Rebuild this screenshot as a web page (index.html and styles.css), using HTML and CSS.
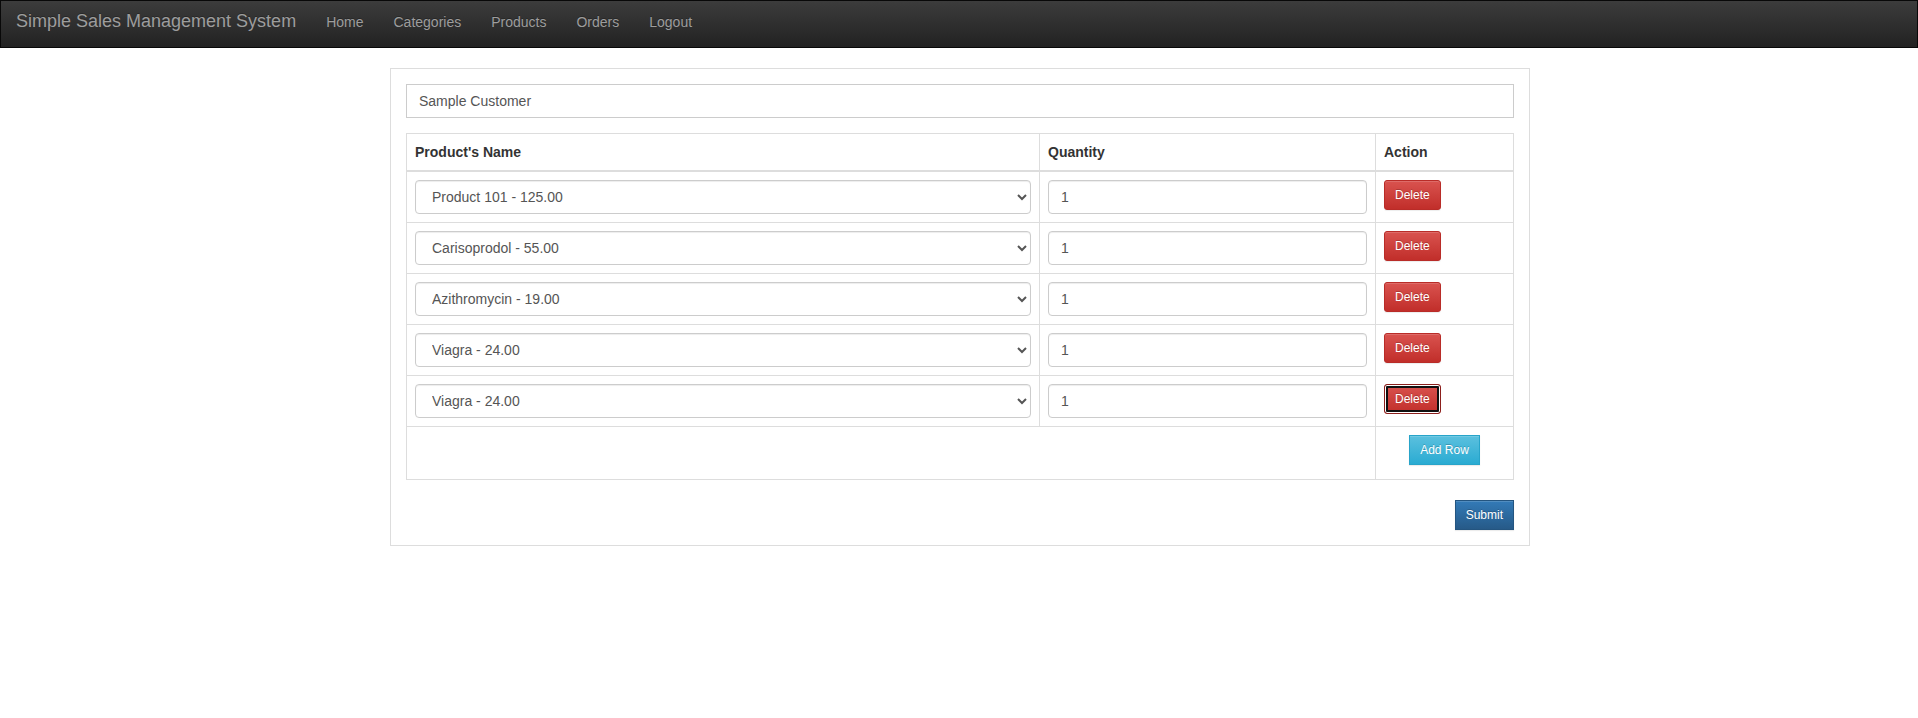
FILE: index.html
```html
<!DOCTYPE html>
<html lang="en">

<head>
    <meta charset="UTF-8">
    <title>Simple Sales Management System</title>
    <link rel="stylesheet" href="styles.css">
</head>

<body>
    <nav class="navbar">
        <a class="brand" href="#">Simple Sales Management System</a>
        <ul class="nav">
            <li><a href="#">Home</a></li>
            <li><a href="#">Categories</a></li>
            <li><a href="#">Products</a></li>
            <li><a href="#">Orders</a></li>
            <li><a href="#">Logout</a></li>
        </ul>
    </nav>

    <div class="container">
        <form class="box">
            <div class="form-group">
                <input class="form-control customer" type="text" value="Sample Customer">
            </div>

            <table class="order-table">
                <colgroup>
                    <col class="col-name">
                    <col class="col-qty">
                    <col class="col-action">
                </colgroup>
                <thead>
                    <tr>
                        <th>Product's Name</th>
                        <th>Quantity</th>
                        <th>Action</th>
                    </tr>
                </thead>
                <tbody>
                    <tr>
                        <td>
                            <select class="form-control">
                                <option>Product 101 - 125.00</option>
                            </select>
                        </td>
                        <td><input class="form-control" type="text" value="1"></td>
                        <td><button type="button" class="btn btn-sm btn-danger">Delete</button></td>
                    </tr>
                    <tr>
                        <td>
                            <select class="form-control">
                                <option>Carisoprodol - 55.00</option>
                            </select>
                        </td>
                        <td><input class="form-control" type="text" value="1"></td>
                        <td><button type="button" class="btn btn-sm btn-danger">Delete</button></td>
                    </tr>
                    <tr>
                        <td>
                            <select class="form-control">
                                <option>Azithromycin - 19.00</option>
                            </select>
                        </td>
                        <td><input class="form-control" type="text" value="1"></td>
                        <td><button type="button" class="btn btn-sm btn-danger">Delete</button></td>
                    </tr>
                    <tr>
                        <td>
                            <select class="form-control">
                                <option>Viagra - 24.00</option>
                            </select>
                        </td>
                        <td><input class="form-control" type="text" value="1"></td>
                        <td><button type="button" class="btn btn-sm btn-danger">Delete</button></td>
                    </tr>
                    <tr>
                        <td>
                            <select class="form-control">
                                <option>Viagra - 24.00</option>
                            </select>
                        </td>
                        <td><input class="form-control" type="text" value="1"></td>
                        <td><button type="button" class="btn btn-sm btn-danger focused">Delete</button></td>
                    </tr>
                    <tr class="add-row">
                        <td colspan="2"></td>
                        <td class="center"><button type="button" class="btn btn-sm btn-info">Add Row</button></td>
                    </tr>
                </tbody>
            </table>

            <div class="actions">
                <button type="button" class="btn btn-sm btn-primary">Submit</button>
            </div>
        </form>
    </div>
</body>

</html>
```

FILE: styles.css
```css
* {
    box-sizing: border-box;
}

body {
    margin: 0px;
    font-family: "Liberation Sans", Arial, sans-serif;
    font-size: 14px;
    line-height: 20px;
    color: #333;
    background-color: #fff;
}

a {
    text-decoration: none;
}

/* top bar */
.navbar {
    display: flex;
    height: 48px;
    margin-bottom: 20px;
    border: 1px solid #080808;
    background-image: linear-gradient(to bottom, #3c3c3c 0, #222 100%);
}

.brand {
    padding: 10px 15px;
    font-size: 18px;
    line-height: 20px;
    color: #9d9d9d;
    text-shadow: 0 -1px 0 rgba(0, 0, 0, .25);
}

.nav {
    display: flex;
    margin: 0px;
    padding: 0px;
    list-style: none;
}

.nav a {
    display: block;
    padding: 11px 15px;
    line-height: 20px;
    color: #9d9d9d;
    text-shadow: 0 -1px 0 rgba(0, 0, 0, .25);
}

/* page */
.container {
    width: 1170px;
    margin: 0px auto;
    padding: 0px 14px 0px 16px;
}

.box {
    display: block;
    margin: 0px;
    padding: 15px;
    border: 1px solid #ddd;
}

.form-group {
    margin-bottom: 15px;
}

.form-control {
    display: block;
    width: 100%;
    height: 34px;
    padding: 6px 12px;
    font-family: inherit;
    font-size: 14px;
    line-height: 20px;
    color: #555;
    background-color: #fff;
    border: 1px solid #ccc;
    border-radius: 4px;
    box-shadow: inset 0 1px 1px rgba(0, 0, 0, .075);
}

.customer {
    border-radius: 0px;
    box-shadow: none;
}

/* table */
.order-table {
    width: 100%;
    margin-bottom: 20px;
    border-collapse: collapse;
    border-spacing: 0;
    table-layout: fixed;
}

.col-name {
    width: 633px;
}

.col-qty {
    width: 336px;
}

.order-table th,
.order-table td {
    padding: 8px;
    border: 1px solid #ddd;
    vertical-align: top;
    text-align: left;
}

.order-table th {
    font-weight: bold;
    vertical-align: bottom;
    border-bottom-width: 2px;
}

.add-row td {
    padding-bottom: 14px;
}

.add-row td.center {
    text-align: center;
}

/* buttons */
.btn {
    display: inline-block;
    margin: 0px;
    font-family: inherit;
    font-weight: normal;
    color: #fff;
    text-align: center;
    white-space: nowrap;
    vertical-align: top;
    cursor: pointer;
    border: 1px solid transparent;
    text-shadow: 0 -1px 0 rgba(0, 0, 0, .2);
    box-shadow: inset 0 1px 0 rgba(255, 255, 255, .15), 0 1px 1px rgba(0, 0, 0, .075);
}

.btn-sm {
    height: 30px;
    padding: 5px 10px;
    font-size: 12px;
    line-height: 18px;
    border-radius: 3px;
}

.btn-danger {
    background-image: linear-gradient(to bottom, #d9534f 0, #c12e2a 100%);
    border-color: #b92c28;
}

.btn-danger.focused {
    border-color: #8c1f1c;
    box-shadow: inset 0 0 0 1px #fff, inset 0 0 0 3px #101010;
}

.btn-info {
    background-image: linear-gradient(to bottom, #5bc0de 0, #2aabd2 100%);
    border-color: #28a4c9;
    border-radius: 0px;
}

.btn-primary {
    background-image: linear-gradient(to bottom, #337ab7 0, #265a88 100%);
    border-color: #245580;
    border-radius: 0px;
}

.actions {
    display: flex;
    justify-content: flex-end;
}
```
